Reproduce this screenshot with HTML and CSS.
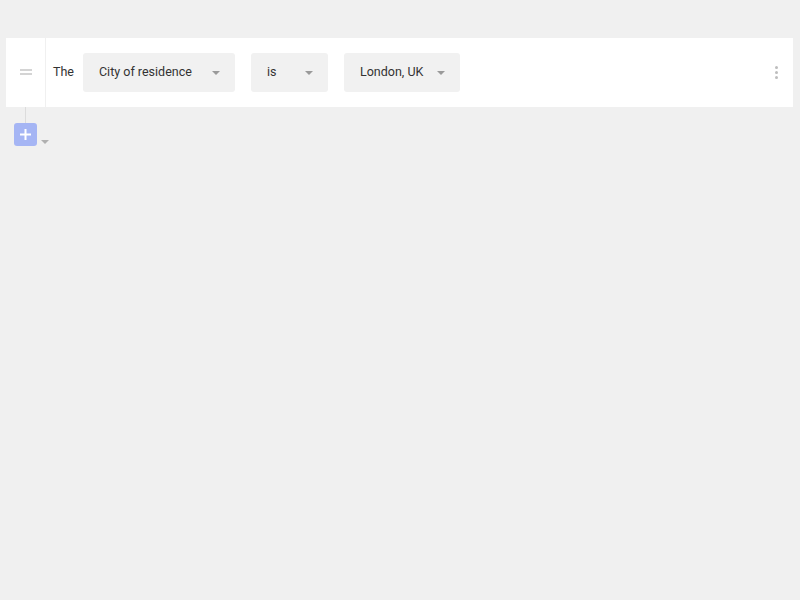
FILE: index.html
```html
<!DOCTYPE html>
<html lang="en">
<head>
    <meta charset="UTF-8">
    <title>Rule Builder</title>
    <link rel="stylesheet" href="styles.css">
</head>
<body>
    <div class="rule">
        <div class="handle"><span class="grip"></span></div>
        <div class="condition">
            <span class="word">The</span>
            <div class="select select-field">
                <span>City of residence</span>
                <span class="caret"></span>
            </div>
            <div class="select select-op">
                <span>is</span>
                <span class="caret"></span>
            </div>
            <div class="select select-value">
                <span>London, UK</span>
                <span class="caret"></span>
            </div>
        </div>
        <div class="more">
            <span></span><span></span><span></span>
        </div>
    </div>
    <div class="add-row">
        <div class="connector"></div>
        <div class="add-controls">
            <button class="add-button">
                <svg width="11" height="11" viewBox="0 0 11 11">
                    <path d="M5.5 0v11M0 5.5h11" stroke="#fff" stroke-width="2"/>
                </svg>
            </button>
            <span class="caret small"></span>
        </div>
    </div>
</body>
</html>
```

FILE: styles.css
```css
body {
    margin: 0;
    padding: 38px 7px 0 6px;
    background-color: #f0f0f0;
    font-family: Roboto, "Liberation Sans", sans-serif;
    font-size: 12.5px;
    color: #333;
}
.rule {
    display: flex;
    align-items: center;
    height: 69px;
    background-color: #fff;
}
.handle {
    align-self: stretch;
    width: 39px;
    border-right: 1px solid #f0f0f0;
    display: flex;
    align-items: center;
    justify-content: center;
}
.grip {
    width: 12px;
    height: 2px;
    margin-bottom: 1px;
    border-top: 2px solid #d4d4d4;
    border-bottom: 2px solid #d4d4d4;
}
.condition {
    display: flex;
    align-items: center;
    padding-left: 7px;
    flex: 1;
}
.word {
    margin-right: 9px;
    padding-bottom: 2px;
}
.select {
    display: flex;
    align-items: center;
    justify-content: space-between;
    height: 39px;
    padding: 0 15px 2px 16px;
    box-sizing: border-box;
    background-color: #f1f1f1;
    border-radius: 3px;
    margin-right: 16px;
}
.select-field {
    width: 152px;
}
.select-op {
    width: 77px;
}
.select-value {
    width: 116px;
}
.caret {
    width: 0;
    height: 0;
    margin-top: 2px;
    border-left: 4px solid transparent;
    border-right: 4px solid transparent;
    border-top: 4px solid #9a9a9a;
}
.more {
    display: flex;
    flex-direction: column;
    gap: 2px;
    margin-right: 15px;
}
.more span {
    width: 3px;
    height: 3px;
    border-radius: 50%;
    background-color: #bdbdbd;
}
.add-row {
    padding-left: 8px;
}
.connector {
    width: 1px;
    height: 16px;
    margin-left: 11px;
    background-color: #dcdcdc;
}
.add-controls {
    display: flex;
    align-items: flex-end;
}
.add-button {
    width: 23px;
    height: 23px;
    padding: 0;
    border: none;
    border-radius: 3px;
    background-color: #a5b5f4;
    display: flex;
    align-items: center;
    justify-content: center;
}
.caret.small {
    margin: 0 0 2px 4px;
    border-top-color: #b0b0b0;
}
```
